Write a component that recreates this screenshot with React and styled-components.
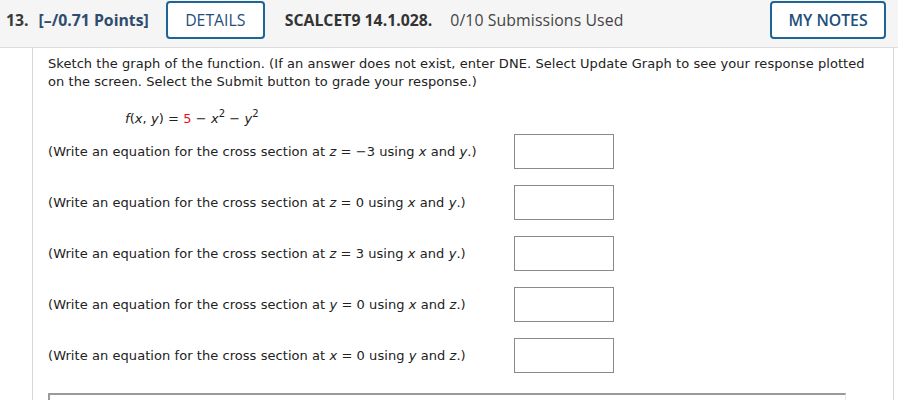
import React from "react";
import styled, { createGlobalStyle } from "styled-components";

const Global = createGlobalStyle`
  html, body { margin: 0; padding: 0; background: #fff; overflow: hidden; }
  body { width: 898px; height: 400px; }
`;

const Page = styled.div`
  width: 898px;
  height: 400px;
  overflow: hidden;
`;

const Header = styled.div`
  display: flex;
  align-items: center;
  height: 39px;
  padding: 0 12px 8px 6px;
  background: #f5f5f5;
  border-bottom: 1px solid #dcdcdc;
  font-family: "Open Sans", sans-serif;
  font-size: 15.8px;
  color: #333;
`;

const Num = styled.span`
  font-weight: 700;
  color: #3a3a3a;
`;

const Points = styled.span`
  font-weight: 700;
  color: #2e4c6e;
  margin-left: 10px;
`;

const OutlineButton = styled.button`
  box-sizing: border-box;
  height: 38px;
  width: ${(p) => p.$w}px;
  margin-left: ${(p) => p.$ml || 0}px;
  border: 2px solid #1e6496;
  border-radius: 4px;
  background: #fff;
  color: #1d4f7c;
  font-family: "Open Sans", sans-serif;
  font-size: 15.8px;
  font-weight: ${(p) => p.$weight || 400};
  padding: 0;
  margin-top: 1px;
`;

const Code = styled.span`
  font-weight: 700;
  color: #333;
  margin-left: 20px;
`;

const Subs = styled.span`
  color: #444;
  margin-left: 18px;
  letter-spacing: 0.1px;
`;

const Spacer = styled.div`
  flex: 1;
`;

const Body = styled.div`
  margin-left: 32px;
  width: 862px;
  height: 352px;
  border-left: 1px solid #d6d6d6;
  border-right: 1px solid #d6d6d6;
  padding: 7px 0 0 15px;
  box-sizing: border-box;
  font-family: "DejaVu Sans", Verdana, sans-serif;
  font-size: 13px;
  letter-spacing: 0.06px;
  line-height: 18px;
  color: #222;
`;

const Intro = styled.p`
  margin: 0;
  width: 830px;
`;

const Formula = styled.div`
  margin: 19px 0 0 77px;
`;

const I = styled.i`
  font-style: italic;
`;

const Red = styled.span`
  color: #e8101a;
`;

const Sup = styled.sup`
  font-size: 10px;
  line-height: 0;
  vertical-align: 6px;
`;

const Rows = styled.div`
  display: grid;
  grid-template-columns: 466px 100px;
  row-gap: 16px;
  margin-top: 6px;
`;

const Label = styled.div`
  display: flex;
  align-items: center;
  height: 35px;
`;

const Answer = styled.div`
  box-sizing: border-box;
  height: 35px;
  width: 100px;
  border: 1px solid #8a8a8a;
  background: #fff;
`;

const GraphBox = styled.div`
  margin-top: 20px;
  width: 798px;
  height: 30px;
  box-sizing: border-box;
  border-top: 2px solid #9a9a9a;
  border-left: 2px solid #9a9a9a;
  border-right: 1px solid #e6e6e6;
`;

const rows = [
  [<I key="a">z</I>, " = \u22123 using ", <I key="b">x</I>, " and ", <I key="c">y</I>],
  [<I key="a">z</I>, " = 0 using ", <I key="b">x</I>, " and ", <I key="c">y</I>],
  [<I key="a">z</I>, " = 3 using ", <I key="b">x</I>, " and ", <I key="c">y</I>],
  [<I key="a">y</I>, " = 0 using ", <I key="b">x</I>, " and ", <I key="c">z</I>],
  [<I key="a">x</I>, " = 0 using ", <I key="b">y</I>, " and ", <I key="c">z</I>],
];

export default function App() {
  return (
    <Page>
      <Global />
      <Header>
        <Num>13.</Num>
        <Points>[–/0.71 Points]</Points>
        <OutlineButton $w={99} $ml={17}>DETAILS</OutlineButton>
        <Code>SCALCET9 14.1.028.</Code>
        <Subs>0/10 Submissions Used</Subs>
        <Spacer />
        <OutlineButton $w={116} $weight={600}>MY NOTES</OutlineButton>
      </Header>
      <Body>
        <Intro>
          Sketch the graph of the function. (If an answer does not exist, enter DNE. Select Update Graph to see your response plotted on the screen. Select the Submit button to grade your response.)
        </Intro>
        <Formula>
          <I>f</I>(<I>x</I>, <I>y</I>) = <Red>5</Red> − <I>x</I><Sup>2</Sup> − <I>y</I><Sup>2</Sup>
        </Formula>
        <Rows>
          {rows.map((r, i) => (
            <React.Fragment key={i}>
              <Label>
                <span>(Write an equation for the cross section at {r}.)</span>
              </Label>
              <Answer />
            </React.Fragment>
          ))}
        </Rows>
        <GraphBox />
      </Body>
    </Page>
  );
}
